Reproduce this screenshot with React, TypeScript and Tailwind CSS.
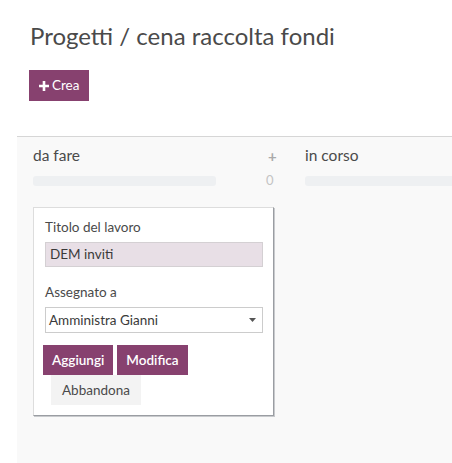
import { useState } from 'react';

export default function App() {
  const [title, setTitle] = useState('DEM inviti');

  return (
    <div className="min-h-[463px] bg-white font-['Lato','Open_Sans',sans-serif] text-[#4c4c4c]">
      <div className="px-[30px] pt-[21px]">
        <h1 className="text-[24px] leading-[30px] font-normal text-[#4a4a4a]">Progetti / cena raccolta fondi</h1>
        <button className="mt-[19px] -ml-px flex h-[31px] items-center gap-[3px] bg-[#87416f] px-[10px] text-[13.5px] text-white">
          <svg width="10" height="10" viewBox="0 0 10 10" fill="white">
            <path d="M3.7 0h2.6v3.7H10v2.6H6.3V10H3.7V6.3H0V3.7h3.7z" />
          </svg>
          Crea
        </button>
      </div>

      <div className="ml-[17px] mt-[35px] min-h-[327px] border-t border-[#d6d6d6] bg-[#f9f9f9] pt-[8px]">
        <div className="flex">
          <div className="w-[288px] shrink-0 pl-[16px]">
            <div className="flex h-[22px] items-center">
              <span className="w-[235px] text-[15.5px] text-[#4a4a4a]">da fare</span>
              <span className="text-[15px] font-bold text-[#aaa]">+</span>
            </div>
            <div className="mt-[4px] flex h-[20px] items-center">
              <div className="h-[10px] w-[183px] rounded-[3px] bg-[#eef0f2]" />
              <span className="ml-[50px] text-[13px] text-[#c4c4c4]">0</span>
            </div>

            <div className="mt-[16px] w-[241px] border border-[#ddd] border-r-[#9a9da2] border-b-[#9a9da2] shadow-[1px_1px_0_#c8cacd] bg-white px-[11px] pb-[10px] pt-[10px]">
              <label className="block text-[13.5px] leading-[18px] text-[#4a4a4a]">Titolo del lavoro</label>
              <div className="mt-[6px] flex h-[25px] w-[218px] items-center border border-[#d4d0d3] bg-[#e8dfe6] pl-[4px] text-[13.5px]">
                <input
                  value={title}
                  onChange={(e) => setTitle(e.target.value)}
                  className="w-full bg-transparent text-[#3a3a3a] outline-none caret-black"
                />
              </div>
              <label className="mt-[16px] block text-[13.5px] leading-[18px] text-[#4a4a4a]">Assegnato a</label>
              <div className="mt-[6px] flex h-[26px] w-[218px] items-center justify-between border border-[#ccc] bg-white pl-[3px] pr-[6px] text-[13.5px] text-[#3a3a3a]">
                <span>Amministra Gianni</span>
                <svg width="7" height="4" viewBox="0 0 7 4" fill="#555">
                  <path d="M0 0h7L3.5 4z" />
                </svg>
              </div>
              <div className="-ml-[2px] mt-[12px] flex gap-[4px]">
                <button className="h-[30px] bg-[#87416f] px-[9px] text-[13.5px] font-semibold text-white">Aggiungi</button>
                <button className="h-[30px] bg-[#87416f] px-[9px] text-[13.5px] font-semibold text-white">Modifica</button>
              </div>
              <button className="ml-[6px] h-[30px] bg-[#f3f3f3] px-[11px] text-[13.5px] text-[#4a4a4a]">Abbandona</button>
            </div>
          </div>

          <div className="flex-1">
            <div className="flex h-[22px] items-center">
              <span className="text-[15.5px] text-[#4a4a4a]">in corso</span>
            </div>
            <div className="mt-[4px] flex h-[20px] items-center">
              <div className="h-[10px] w-full rounded-l-[3px] bg-[#eef0f2]" />
            </div>
          </div>
        </div>
      </div>
    </div>
  );
}
